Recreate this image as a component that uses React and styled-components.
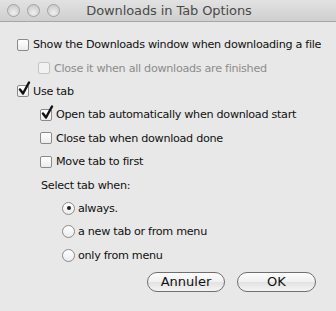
import React, { useState } from "react";
import styled, { createGlobalStyle } from "styled-components";

const GlobalStyle = createGlobalStyle`
    html, body {
        margin: 0;
        padding: 0;
        background: #e8e8e8;
    }
    * {
        box-sizing: border-box;
    }
`;

const options = [
    { id: "showWindow", label: "Show the Downloads window when downloading a file", level: 0 },
    { id: "closeWhenDone", label: "Close it when all downloads are finished", level: 1, disabled: true },
    { id: "useTab", label: "Use tab", level: 0 },
    { id: "openAuto", label: "Open tab automatically when download start", level: 1 },
    { id: "closeTab", label: "Close tab when download done", level: 1 },
    { id: "moveFirst", label: "Move tab to first", level: 1 },
];

const radios = [
    { id: "always", label: "always." },
    { id: "newTab", label: "a new tab or from menu" },
    { id: "menu", label: "only from menu" },
];

const CheckMark = () => (
    <svg width="14" height="15" viewBox="0 0 14 15">
        <path d="M3 8.5 L6 12.5 L12 1.5" fill="none" stroke="#111" strokeWidth="2.4" strokeLinecap="round" strokeLinejoin="round" />
    </svg>
);

const App = () => {
    const [checked, setChecked] = useState({ useTab: true, openAuto: true });
    const [selectWhen, setSelectWhen] = useState("always");

    const toggle = (id) => setChecked((prev) => ({ ...prev, [id]: !prev[id] }));

    return (
        <>
            <GlobalStyle />
            <Window>
                <TitleBar>
                    <Lights>
                        <Light />
                        <Light />
                        <Light />
                    </Lights>
                    <Title>Downloads in Tab Options</Title>
                </TitleBar>
                <Content>
                    {options.map((opt) => (
                        <Row key={opt.id} $indent={opt.level ? (opt.disabled ? 38 : 40) : 17}>
                            <Check
                                $disabled={opt.disabled}
                                onClick={() => !opt.disabled && toggle(opt.id)}
                            >
                                {checked[opt.id] && <CheckMark />}
                            </Check>
                            <Label $disabled={opt.disabled}>{opt.label}</Label>
                        </Row>
                    ))}
                    <Row $indent={41}>
                        <Label>Select tab when:</Label>
                    </Row>
                    {radios.map((r) => (
                        <Row key={r.id} $indent={62}>
                            <Radio onClick={() => setSelectWhen(r.id)}>
                                {selectWhen === r.id && <Dot />}
                            </Radio>
                            <Label>{r.label}</Label>
                        </Row>
                    ))}
                    <Buttons>
                        <PushButton $width={78}>Annuler</PushButton>
                        <PushButton $width={79}>OK</PushButton>
                    </Buttons>
                </Content>
            </Window>
        </>
    );
};

const Window = styled.div`
    width: 336px;
    height: 311px;
    background: #e8e8e8;
    font-family: "DejaVu Sans", "Liberation Sans", sans-serif;
    overflow: hidden;
`;

const TitleBar = styled.div`
    position: relative;
    height: 22px;
    background: linear-gradient(#e2e2e2, #cfcfcf);
    border-bottom: 1px solid #a6a6a6;
    display: flex;
    align-items: center;
    justify-content: center;
`;

const Lights = styled.div`
    position: absolute;
    left: 7px;
    top: 4px;
    display: flex;
    gap: 7px;
`;

const Light = styled.span`
    width: 13px;
    height: 13px;
    border-radius: 50%;
    border: 1px solid #a2a2a2;
    background: radial-gradient(circle at 50% 70%, #f0f0f0 0%, #d6d6d6 55%, #c4c4c4 100%);
`;

const Title = styled.div`
    font-size: 13px;
    color: #4a4a4a;
    margin-left: 2px;
    letter-spacing: -0.1px;
`;

const Content = styled.div`
    padding-top: 11px;
`;

const Row = styled.div`
    height: 23.4px;
    display: flex;
    align-items: center;
    padding-left: ${(p) => p.$indent}px;
`;

const Check = styled.span`
    position: relative;
    width: 12px;
    height: 12px;
    flex-shrink: 0;
    border: 1px solid ${(p) => (p.$disabled ? "#c4c4c4" : "#8a8a8a")};
    border-radius: 2px;
    background: ${(p) => (p.$disabled ? "#f2f2f2" : "linear-gradient(#ffffff, #ececec)")};
    margin-right: 4px;

    svg {
        position: absolute;
        left: -1px;
        top: -5px;
    }
`;

const Radio = styled.span`
    position: relative;
    width: 13px;
    height: 13px;
    flex-shrink: 0;
    border: 1px solid #8a8a8a;
    border-radius: 50%;
    background: linear-gradient(#ffffff, #ececec);
    margin-right: 3px;
    display: flex;
    align-items: center;
    justify-content: center;
`;

const Dot = styled.span`
    width: 4px;
    height: 4px;
    border-radius: 50%;
    background: #222;
`;

const Label = styled.span`
    font-size: 11.2px;
    color: ${(p) => (p.$disabled ? "#8c8c8c" : "#111")};
    white-space: nowrap;
    letter-spacing: -0.3px;
`;

const Buttons = styled.div`
    display: flex;
    justify-content: flex-end;
    gap: 12px;
    padding: 5px 20px 0 0;
`;

const PushButton = styled.button`
    width: ${(p) => p.$width}px;
    height: 20px;
    border: 1px solid #6f6f6f;
    border-radius: 10px;
    background: linear-gradient(#fdfdfd 0%, #f0f0f0 50%, #e2e2e2 51%, #f4f4f4 100%);
    font-family: "DejaVu Sans", "Liberation Sans", sans-serif;
    font-size: 13px;
    color: #111;
    padding: 0;
    cursor: pointer;
`;

export default App;
